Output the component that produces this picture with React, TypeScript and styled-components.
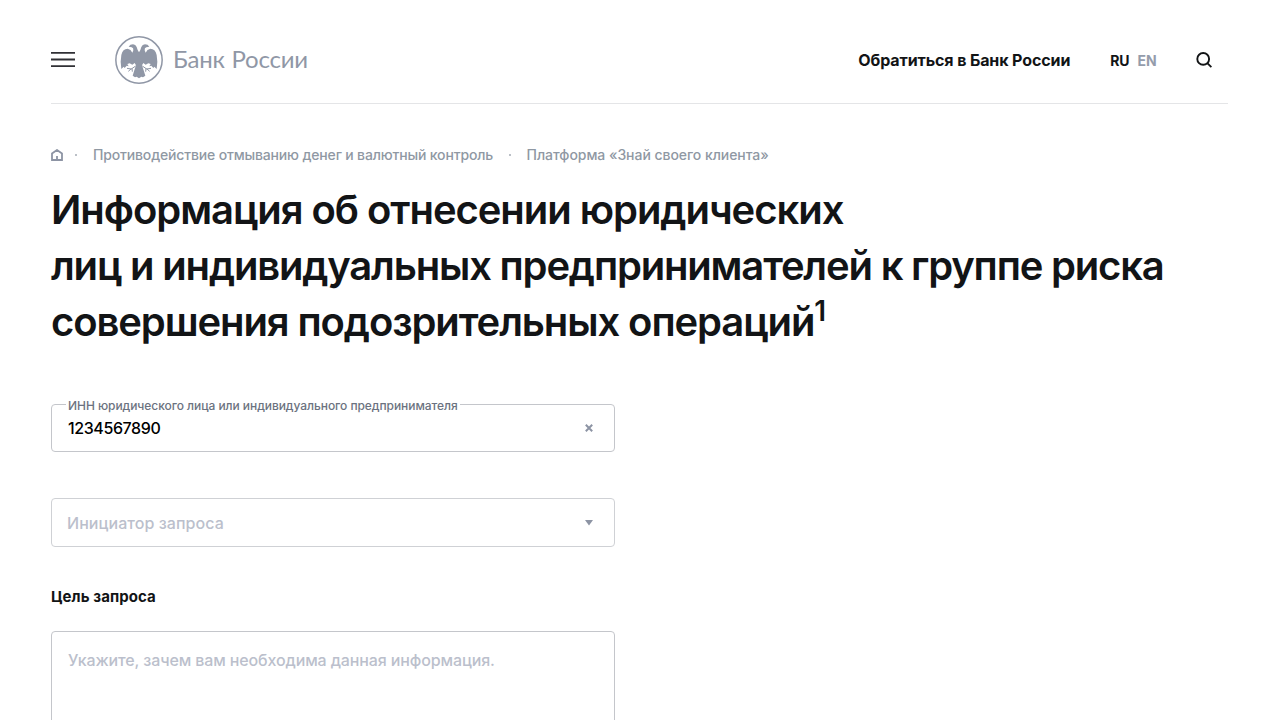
import React from "react";
import styled, { createGlobalStyle } from "styled-components";

const GlobalStyle = createGlobalStyle`
  * { box-sizing: border-box; }
  html, body { margin: 0; height: 720px; overflow: hidden; background: #fff; }
  body { font-family: Inter, "Liberation Sans", sans-serif; color: #121416; }
  button, input, textarea { font-family: inherit; }
`;

const Page = styled.div`
  height: 720px;
  overflow: hidden;
  padding: 0 52px 0 51px;
`;

const Header = styled.header`
  display: flex;
  align-items: center;
  height: 104px;
  padding-top: 16px;
  border-bottom: 1px solid #e4e5e7;
`;

const IconButton = styled.button`
  display: flex;
  padding: 0;
  border: 0;
  background: none;
`;

const Logo = styled.a`
  display: flex;
  align-items: center;
  gap: 10px;
  margin-left: 40px;
  color: #9097a6;
`;

const LogoText = styled.span`
  padding-bottom: 2px;
  font: 400 24px/32px Lato, sans-serif;
  letter-spacing: -0.25px;
  word-spacing: 1px;
  white-space: nowrap;
`;

const HeaderNav = styled.nav`
  display: flex;
  align-items: center;
  margin-left: auto;
  padding-right: 16px;
`;

const ContactLink = styled.a`
  font-size: 16px;
  line-height: 24px;
  font-weight: 700;
  letter-spacing: -0.11px;
  white-space: nowrap;
`;

const Languages = styled.div`
  display: flex;
  gap: 8px;
  margin: 2px 39.5px 0 40px;
`;

const Language = styled.a<{ $muted?: boolean }>`
  font-size: 14px;
  line-height: 20px;
  font-weight: 700;
  letter-spacing: -0.1px;
  color: ${(p) => (p.$muted ? "#949cab" : "#121416")};
`;

const Breadcrumbs = styled.nav`
  display: flex;
  align-items: center;
  height: 20px;
  margin-top: 41px;
  color: #8f98a3;
`;

const Crumb = styled.a<{ $spacing: number }>`
  font-size: 14px;
  line-height: 20px;
  font-weight: 500;
  letter-spacing: ${(p) => p.$spacing}px;
  white-space: nowrap;
`;

const Dot = styled.i<{ $left: number; $right: number }>`
  width: 2px;
  height: 2px;
  margin: 0 ${(p) => p.$right}px 0 ${(p) => p.$left}px;
  border-radius: 1px;
  background: #a5abb5;
`;

const Title = styled.h1`
  margin: 17px 0 0;
  font-size: 40px;
  line-height: 56px;
  font-weight: 600;
`;

const TitleLine = styled.span<{ $spacing: number }>`
  display: block;
  height: 56px;
  white-space: nowrap;
  letter-spacing: ${(p) => p.$spacing}px;
`;

const Footnote = styled.sup`
  font-size: 28px;
  line-height: 0;
  font-weight: 600;
  vertical-align: 15px;
`;

const Form = styled.form`
  display: flex;
  flex-direction: column;
  width: 563.5px;
  margin-top: 54px;
`;

const Field = styled.div`
  position: relative;
  display: flex;
  align-items: center;
  justify-content: space-between;
  height: 48px;
  padding: 0 20.5px 0 16px;
  border: 1px solid #c4c6cb;
  border-radius: 4px;
`;

const SelectField = styled(Field)`
  margin-top: 46px;
  height: 49px;
  border-color: #cfd1d5;
  padding-left: 15px;
`;

const FloatingLabel = styled.label`
  position: absolute;
  top: -8px;
  left: 14px;
  padding: 0 2px;
  background: #fff;
  font-size: 12px;
  line-height: 18px;
  font-weight: 500;
  letter-spacing: -0.06px;
  color: #6b7280;
  white-space: nowrap;
`;

const FieldInput = styled.input`
  flex: 1;
  padding: 0;
  border: 0;
  outline: 0;
  background: none;
  font-size: 16px;
  line-height: 24px;
  font-weight: 500;
  letter-spacing: -0.4px;
  color: #000;
`;

const Placeholder = styled.span`
  font-size: 16px;
  line-height: 24px;
  font-weight: 500;
  letter-spacing: 0.06px;
  color: #bbbfcc;
`;

const SectionLabel = styled.label`
  margin-top: 38px;
  font-size: 15px;
  line-height: 24px;
  font-weight: 700;
  letter-spacing: 0.08px;
`;

const Purpose = styled.textarea`
  height: 144px;
  margin-top: 22px;
  padding: 16px;
  border: 1px solid #c4c6cb;
  border-radius: 4px;
  outline: 0;
  resize: none;
  font-size: 16px;
  line-height: 24px;
  font-weight: 500;
  letter-spacing: -0.12px;
  &::placeholder { color: #bbbfcc; }
`;

const Eagle = () => (
  <svg width="48" height="48" viewBox="15 18 144 144" fill="currentColor">
    <circle cx="87" cy="90" r="69.5" fill="none" stroke="currentColor" strokeWidth="4.5" />
    <path d="M87 67 L83 60 L80 51 Q77 43 69 43 Q60 43 56 50 L65 52 Q71 54 70 61 L67 68 Q63 58 53 56 Q38 56 34 75 L32 95 L34 117 L41 110 L44 114 L50 107 L56 109 L52 102 L59 100 L67 104 L74 99 L78 106 L73 121 L68 137 L75 142 L80 140 L87 145 L94 140 L99 142 L106 137 L101 121 L96 106 L100 99 L107 104 L115 100 L122 102 L118 109 L124 107 L130 114 L133 110 L140 117 L142 95 L140 75 Q136 56 121 56 Q111 58 107 68 L104 61 Q103 54 109 52 L118 50 Q114 43 105 43 Q97 43 94 51 L91 60 Z" />
    <path d="M77 108 L64 117 L51 115 M64 116 L55 124 M66 115 L67 125 M97 108 L110 117 L123 115 M110 116 L119 124 M108 115 L107 125" fill="none" stroke="currentColor" strokeWidth="3" />
  </svg>
);

export default function App() {
  return (
    <Page>
      <GlobalStyle />
      <Header>
        <IconButton aria-label="Меню">
          <svg width="24" height="18" viewBox="0 0 24 18" stroke="#303035" strokeWidth="1.8">
            <path d="M0 1.9h24M0 8.5h24M0 15.1h24" />
          </svg>
        </IconButton>
        <Logo>
          <Eagle />
          <LogoText>Банк России</LogoText>
        </Logo>
        <HeaderNav>
          <ContactLink>Обратиться в Банк России</ContactLink>
          <Languages>
            <Language>RU</Language>
            <Language $muted>EN</Language>
          </Languages>
          <IconButton aria-label="Поиск">
            <svg width="16" height="16" viewBox="0 0 16 16" fill="none" stroke="#121416" strokeWidth="1.9">
              <circle cx="7.2" cy="6.9" r="5.9" />
              <path d="M11.3 11.1 15.4 15.2" />
            </svg>
          </IconButton>
        </HeaderNav>
      </Header>

      <Breadcrumbs>
        <svg width="12" height="12" viewBox="0 0 12 12" fill="none" stroke="#8d94a4" strokeWidth="1.8">
          <path d="M1 11V4.4L6 1l5 3.4V11ZM6 11V7" />
        </svg>
        <Dot $left={12} $right={16} />
        <Crumb $spacing={-0.16}>Противодействие отмыванию денег и валютный контроль</Crumb>
        <Dot $left={15.5} $right={16} />
        <Crumb $spacing={-0.05}>Платформа «Знай своего клиента»</Crumb>
      </Breadcrumbs>

      <Title>
        <TitleLine $spacing={-1.05}>Информация об отнесении юридических</TitleLine>
        <TitleLine $spacing={-1.18}>лиц и индивидуальных предпринимателей к группе риска</TitleLine>
        <TitleLine $spacing={-1.1}>
          совершения подозрительных операций<Footnote>1</Footnote>
        </TitleLine>
      </Title>

      <Form>
        <Field>
          <FloatingLabel>ИНН юридического лица или индивидуального предпринимателя</FloatingLabel>
          <FieldInput defaultValue="1234567890" />
          <svg width="8" height="8" viewBox="0 0 8 8" stroke="#8d94a4" strokeWidth="2">
            <path d="M.8.8 7.2 7.2M7.2.8.8 7.2" />
          </svg>
        </Field>
        <SelectField>
          <Placeholder>Инициатор запроса</Placeholder>
          <svg width="8" height="6" viewBox="0 0 8 6" fill="#8d94a4">
            <path d="M0 0h8L4 5.5Z" />
          </svg>
        </SelectField>
        <SectionLabel>Цель запроса</SectionLabel>
        <Purpose placeholder="Укажите, зачем вам необходима данная информация." />
      </Form>
    </Page>
  );
}
